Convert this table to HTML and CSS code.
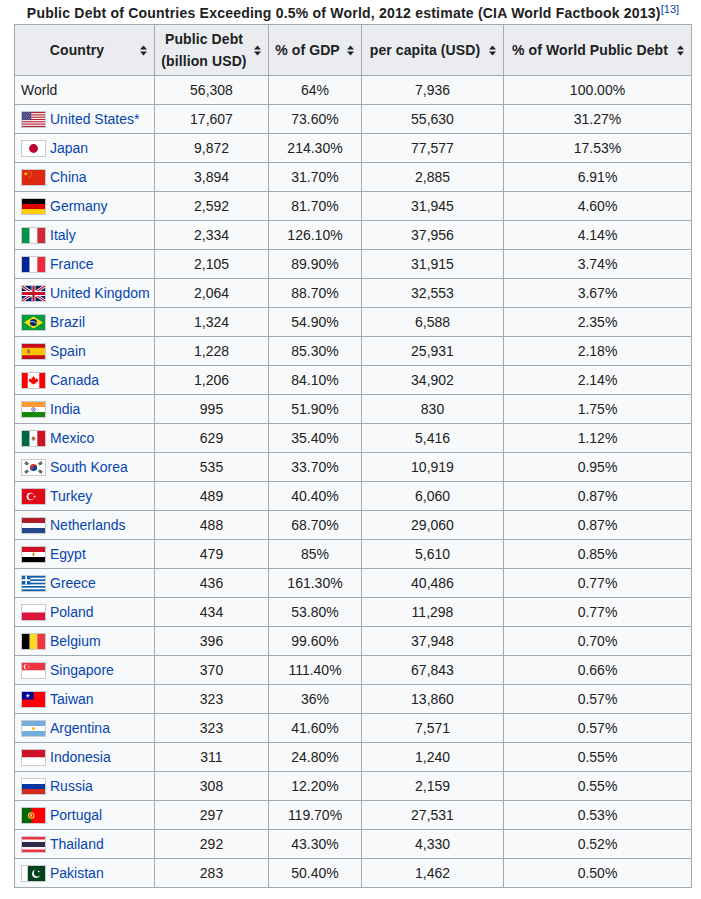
FILE: index.html
```html
<!DOCTYPE html>
<html lang="en">
<head>
<meta charset="utf-8">
<title>Public Debt of Countries</title>
<link rel="stylesheet" href="styles.css">
</head>
<body>
<svg class="defs" width="0" height="0" aria-hidden="true">
  <defs>
    <symbol id="star" viewBox="-1 -1 2 2" overflow="visible">
      <polygon points="0,-1 0.225,-0.309 0.951,-0.309 0.363,0.118 0.588,0.809 0,0.382 -0.588,0.809 -0.363,0.118 -0.951,-0.309 -0.225,-0.309"/>
    </symbol>
    <symbol id="sort" viewBox="0 0 7 11">
      <polygon points="0,4.5 3.5,0.5 7,4.5" fill="#202122"/>
      <polygon points="0,6.5 3.5,10.5 7,6.5" fill="#202122"/>
    </symbol>
  </defs>
</svg>
<div class="page">
<table class="wikitable">
  <caption>Public Debt of Countries Exceeding 0.5% of World, 2012 estimate (CIA World Factbook 2013)<sup class="ref">[13]</sup></caption>
  <colgroup>
    <col class="c1"><col class="c2"><col class="c3"><col class="c4"><col class="c5">
  </colgroup>
  <thead>
    <tr>
      <th><div class="th"><span class="lbl">Country</span><svg class="sort" width="7" height="11"><use href="#sort"/></svg></div></th>
      <th><div class="th"><span class="lbl">Public Debt<br>(billion USD)</span><svg class="sort" width="7" height="11"><use href="#sort"/></svg></div></th>
      <th><div class="th"><span class="lbl">% of GDP</span><svg class="sort" width="7" height="11"><use href="#sort"/></svg></div></th>
      <th><div class="th"><span class="lbl">per capita (USD)</span><svg class="sort" width="7" height="11"><use href="#sort"/></svg></div></th>
      <th><div class="th"><span class="lbl">% of World Public Debt</span><svg class="sort" width="7" height="11"><use href="#sort"/></svg></div></th>
    </tr>
  </thead>
  <tbody>
    <tr><td class="name">World</td><td>56,308</td><td>64%</td><td>7,936</td><td>100.00%</td></tr>

    <tr><td class="name"><svg class="flag" viewBox="0 0 23 15" width="23" height="15" preserveAspectRatio="none">
      <rect width="23" height="15" fill="#fff"/>
      <g fill="#b22234"><rect y="0" width="23" height="1.154"/><rect y="2.308" width="23" height="1.154"/><rect y="4.615" width="23" height="1.154"/><rect y="6.923" width="23" height="1.154"/><rect y="9.231" width="23" height="1.154"/><rect y="11.538" width="23" height="1.154"/><rect y="13.846" width="23" height="1.154"/></g>
      <rect width="9.2" height="8.08" fill="#4a4b7e"/>
      <g fill="#9a9bc0"><circle cx="1.5" cy="1.3" r="0.45"/><circle cx="3.5" cy="1.3" r="0.45"/><circle cx="5.5" cy="1.3" r="0.45"/><circle cx="7.5" cy="1.3" r="0.45"/><circle cx="2.5" cy="3" r="0.45"/><circle cx="4.5" cy="3" r="0.45"/><circle cx="6.5" cy="3" r="0.45"/><circle cx="1.5" cy="4.7" r="0.45"/><circle cx="3.5" cy="4.7" r="0.45"/><circle cx="5.5" cy="4.7" r="0.45"/><circle cx="7.5" cy="4.7" r="0.45"/><circle cx="2.5" cy="6.4" r="0.45"/><circle cx="4.5" cy="6.4" r="0.45"/><circle cx="6.5" cy="6.4" r="0.45"/></g>
    </svg><a href="#">United States*</a></td><td>17,607</td><td>73.60%</td><td>55,630</td><td>31.27%</td></tr>

    <tr><td class="name"><svg class="flag" viewBox="0 0 23 15" width="23" height="15">
      <rect width="23" height="15" fill="#fff"/><circle cx="11.5" cy="7.5" r="4.4" fill="#bc002d"/>
    </svg><a href="#">Japan</a></td><td>9,872</td><td>214.30%</td><td>77,577</td><td>17.53%</td></tr>

    <tr><td class="name"><svg class="flag" viewBox="0 0 23 15" width="23" height="15">
      <rect width="23" height="15" fill="#de2910"/>
      <g fill="#ffde00"><use href="#star" x="1.6" y="1.6" width="4.4" height="4.4"/><use href="#star" x="7" y="0.8" width="1.5" height="1.5"/><use href="#star" x="8.6" y="2.3" width="1.5" height="1.5"/><use href="#star" x="8.6" y="4.4" width="1.5" height="1.5"/><use href="#star" x="7" y="5.9" width="1.5" height="1.5"/></g>
    </svg><a href="#">China</a></td><td>3,894</td><td>31.70%</td><td>2,885</td><td>6.91%</td></tr>

    <tr><td class="name"><svg class="flag" viewBox="0 0 23 15" width="23" height="15">
      <rect width="23" height="5" fill="#000"/><rect y="5" width="23" height="5" fill="#dd0000"/><rect y="10" width="23" height="5" fill="#ffce00"/>
    </svg><a href="#">Germany</a></td><td>2,592</td><td>81.70%</td><td>31,945</td><td>4.60%</td></tr>

    <tr><td class="name"><svg class="flag" viewBox="0 0 23 15" width="23" height="15">
      <rect width="7.67" height="15" fill="#009246"/><rect x="7.67" width="7.67" height="15" fill="#fff"/><rect x="15.33" width="7.67" height="15" fill="#ce2b37"/>
    </svg><a href="#">Italy</a></td><td>2,334</td><td>126.10%</td><td>37,956</td><td>4.14%</td></tr>

    <tr><td class="name"><svg class="flag" viewBox="0 0 23 15" width="23" height="15">
      <rect width="7.67" height="15" fill="#002395"/><rect x="7.67" width="7.67" height="15" fill="#fff"/><rect x="15.33" width="7.67" height="15" fill="#ed2939"/>
    </svg><a href="#">France</a></td><td>2,105</td><td>89.90%</td><td>31,915</td><td>3.74%</td></tr>

    <tr><td class="name"><svg class="flag" viewBox="0 0 60 30" width="23" height="15" preserveAspectRatio="none">
      <rect width="60" height="30" fill="#012169"/>
      <path d="M0,0 L60,30 M60,0 L0,30" stroke="#fff" stroke-width="6"/>
      <path d="M0,0 L60,30 M60,0 L0,30" stroke="#c8102e" stroke-width="2.5"/>
      <path d="M30,0 v30 M0,15 h60" stroke="#fff" stroke-width="10"/>
      <path d="M30,0 v30 M0,15 h60" stroke="#c8102e" stroke-width="6"/>
    </svg><a href="#">United Kingdom</a></td><td>2,064</td><td>88.70%</td><td>32,553</td><td>3.67%</td></tr>

    <tr><td class="name"><svg class="flag" viewBox="0 0 23 15" width="23" height="15">
      <rect width="23" height="15" fill="#009c3b"/><polygon points="2,7.5 11.5,1.5 21,7.5 11.5,13.5" fill="#ffdf00"/><circle cx="11.5" cy="7.5" r="3.6" fill="#002776"/><path d="M8.1,6.8 Q11.5,5.8 14.9,8.2" stroke="#fff" stroke-width="0.7" fill="none"/>
    </svg><a href="#">Brazil</a></td><td>1,324</td><td>54.90%</td><td>6,588</td><td>2.35%</td></tr>

    <tr><td class="name"><svg class="flag" viewBox="0 0 23 15" width="23" height="15">
      <rect width="23" height="15" fill="#c60b1e"/><rect y="3.75" width="23" height="7.5" fill="#ffc400"/><rect x="5" y="5.6" width="3" height="3.6" rx="0.8" fill="#c0613c"/>
    </svg><a href="#">Spain</a></td><td>1,228</td><td>85.30%</td><td>25,931</td><td>2.18%</td></tr>

    <tr><td class="name"><svg class="flag" viewBox="0 0 23 15" width="23" height="15">
      <rect width="23" height="15" fill="#fff"/><rect width="5.75" height="15" fill="#ff0000"/><rect x="17.25" width="5.75" height="15" fill="#ff0000"/>
      <polygon points="11.5,3 12.3,4.6 13.3,4.2 12.9,6.6 14.7,5.3 15.1,6.2 16.3,6 15.8,7.5 16.5,8 13.2,10.3 13.4,11 11.7,10.8 11.7,12.5 11.3,12.5 11.3,10.8 9.6,11 9.8,10.3 6.5,8 7.2,7.5 6.7,6 7.9,6.2 8.3,5.3 10.1,6.6 9.7,4.2 10.7,4.6" fill="#ff0000"/>
    </svg><a href="#">Canada</a></td><td>1,206</td><td>84.10%</td><td>34,902</td><td>2.14%</td></tr>

    <tr><td class="name"><svg class="flag" viewBox="0 0 23 15" width="23" height="15">
      <rect width="23" height="5" fill="#ff9933"/><rect y="5" width="23" height="5" fill="#fff"/><rect y="10" width="23" height="5" fill="#138808"/><circle cx="11.5" cy="7.5" r="1.8" fill="none" stroke="#000080" stroke-width="0.6"/><circle cx="11.5" cy="7.5" r="0.5" fill="#000080"/>
    </svg><a href="#">India</a></td><td>995</td><td>51.90%</td><td>830</td><td>1.75%</td></tr>

    <tr><td class="name"><svg class="flag" viewBox="0 0 23 15" width="23" height="15">
      <rect width="7.67" height="15" fill="#006847"/><rect x="7.67" width="7.67" height="15" fill="#fff"/><rect x="15.33" width="7.67" height="15" fill="#ce1126"/><circle cx="11.5" cy="7.3" r="1.7" fill="#a06a3a"/><path d="M9.6,8.6 Q11.5,10.6 13.4,8.6" stroke="#4a8a3a" stroke-width="0.6" fill="none"/>
    </svg><a href="#">Mexico</a></td><td>629</td><td>35.40%</td><td>5,416</td><td>1.12%</td></tr>

    <tr><td class="name"><svg class="flag" viewBox="0 0 23 15" width="23" height="15">
      <rect width="23" height="15" fill="#fff"/>
      <path d="M7.9,7.5 A3.6,3.6 0 0 1 15.1,7.5 Z" fill="#cd2e3a"/><path d="M7.9,7.5 A3.6,3.6 0 0 0 15.1,7.5 Z" fill="#0047a0"/>
      <circle cx="9.7" cy="7.5" r="1.8" fill="#cd2e3a"/><circle cx="13.3" cy="7.5" r="1.8" fill="#0047a0"/>
      <g fill="#000">
        <g transform="translate(4.6,3.4) rotate(34)"><rect x="-1.9" y="-1.3" width="3.8" height="0.6"/><rect x="-1.9" y="-0.3" width="3.8" height="0.6"/><rect x="-1.9" y="0.7" width="3.8" height="0.6"/></g>
        <g transform="translate(18.4,3.4) rotate(-34)"><rect x="-1.9" y="-1.3" width="3.8" height="0.6"/><rect x="-1.9" y="-0.3" width="3.8" height="0.6"/><rect x="-1.9" y="0.7" width="3.8" height="0.6"/></g>
        <g transform="translate(4.6,11.6) rotate(-34)"><rect x="-1.9" y="-1.3" width="3.8" height="0.6"/><rect x="-1.9" y="-0.3" width="3.8" height="0.6"/><rect x="-1.9" y="0.7" width="3.8" height="0.6"/></g>
        <g transform="translate(18.4,11.6) rotate(34)"><rect x="-1.9" y="-1.3" width="3.8" height="0.6"/><rect x="-1.9" y="-0.3" width="3.8" height="0.6"/><rect x="-1.9" y="0.7" width="3.8" height="0.6"/></g>
      </g>
    </svg><a href="#">South Korea</a></td><td>535</td><td>33.70%</td><td>10,919</td><td>0.95%</td></tr>

    <tr><td class="name"><svg class="flag" viewBox="0 0 23 15" width="23" height="15">
      <rect width="23" height="15" fill="#e30a17"/><circle cx="8.4" cy="7.5" r="3.8" fill="#fff"/><circle cx="9.4" cy="7.5" r="3" fill="#e30a17"/><use href="#star" x="11.2" y="6.1" width="2.8" height="2.8" fill="#fff"/>
    </svg><a href="#">Turkey</a></td><td>489</td><td>40.40%</td><td>6,060</td><td>0.87%</td></tr>

    <tr><td class="name"><svg class="flag" viewBox="0 0 23 15" width="23" height="15">
      <rect width="23" height="5" fill="#ae1c28"/><rect y="5" width="23" height="5" fill="#fff"/><rect y="10" width="23" height="5" fill="#21468b"/>
    </svg><a href="#">Netherlands</a></td><td>488</td><td>68.70%</td><td>29,060</td><td>0.87%</td></tr>

    <tr><td class="name"><svg class="flag" viewBox="0 0 23 15" width="23" height="15">
      <rect width="23" height="5" fill="#ce1126"/><rect y="5" width="23" height="5" fill="#fff"/><rect y="10" width="23" height="5" fill="#000"/><rect x="10.6" y="5.8" width="1.8" height="3.4" rx="0.6" fill="#c09300"/>
    </svg><a href="#">Egypt</a></td><td>479</td><td>85%</td><td>5,610</td><td>0.85%</td></tr>

    <tr><td class="name"><svg class="flag" viewBox="0 0 23 15" width="23" height="15" preserveAspectRatio="none">
      <rect width="23" height="15" fill="#fff"/>
      <g fill="#0d5eaf"><rect y="0" width="23" height="1.667"/><rect y="3.333" width="23" height="1.667"/><rect y="6.667" width="23" height="1.667"/><rect y="10" width="23" height="1.667"/><rect y="13.333" width="23" height="1.667"/><rect width="8.333" height="8.333"/></g>
      <g fill="#fff"><rect y="3.333" width="8.333" height="1.667"/><rect x="3.333" width="1.667" height="8.333"/></g>
    </svg><a href="#">Greece</a></td><td>436</td><td>161.30%</td><td>40,486</td><td>0.77%</td></tr>

    <tr><td class="name"><svg class="flag" viewBox="0 0 23 15" width="23" height="15">
      <rect width="23" height="7.5" fill="#fff"/><rect y="7.5" width="23" height="7.5" fill="#dc143c"/>
    </svg><a href="#">Poland</a></td><td>434</td><td>53.80%</td><td>11,298</td><td>0.77%</td></tr>

    <tr><td class="name"><svg class="flag" viewBox="0 0 23 15" width="23" height="15">
      <rect width="7.67" height="15" fill="#000"/><rect x="7.67" width="7.67" height="15" fill="#fdda24"/><rect x="15.33" width="7.67" height="15" fill="#ef3340"/>
    </svg><a href="#">Belgium</a></td><td>396</td><td>99.60%</td><td>37,948</td><td>0.70%</td></tr>

    <tr><td class="name"><svg class="flag" viewBox="0 0 23 15" width="23" height="15">
      <rect width="23" height="7.5" fill="#ef3340"/><rect y="7.5" width="23" height="7.5" fill="#fff"/><circle cx="4.2" cy="3.7" r="2.5" fill="#fff"/><circle cx="5.1" cy="3.7" r="2.2" fill="#ef3340"/>
      <g fill="#fff"><circle cx="7" cy="2.3" r="0.4"/><circle cx="5.9" cy="3.2" r="0.4"/><circle cx="8.1" cy="3.2" r="0.4"/><circle cx="6.3" cy="4.6" r="0.4"/><circle cx="7.7" cy="4.6" r="0.4"/></g>
    </svg><a href="#">Singapore</a></td><td>370</td><td>111.40%</td><td>67,843</td><td>0.66%</td></tr>

    <tr><td class="name"><svg class="flag" viewBox="0 0 23 15" width="23" height="15">
      <rect width="23" height="15" fill="#fe0000"/><rect width="11.5" height="7.5" fill="#000095"/><use href="#star" x="3" y="1" width="5.5" height="5.5" fill="#fff"/><circle cx="5.75" cy="3.75" r="1.5" fill="#000095"/><circle cx="5.75" cy="3.75" r="1.15" fill="#fff"/>
    </svg><a href="#">Taiwan</a></td><td>323</td><td>36%</td><td>13,860</td><td>0.57%</td></tr>

    <tr><td class="name"><svg class="flag" viewBox="0 0 23 15" width="23" height="15">
      <rect width="23" height="5" fill="#74acdf"/><rect y="5" width="23" height="5" fill="#fff"/><rect y="10" width="23" height="5" fill="#74acdf"/><circle cx="11.5" cy="7.5" r="1.5" fill="#f6b40e"/>
    </svg><a href="#">Argentina</a></td><td>323</td><td>41.60%</td><td>7,571</td><td>0.57%</td></tr>

    <tr><td class="name"><svg class="flag" viewBox="0 0 23 15" width="23" height="15">
      <rect width="23" height="7.5" fill="#ce1126"/><rect y="7.5" width="23" height="7.5" fill="#fff"/>
    </svg><a href="#">Indonesia</a></td><td>311</td><td>24.80%</td><td>1,240</td><td>0.55%</td></tr>

    <tr><td class="name"><svg class="flag" viewBox="0 0 23 15" width="23" height="15">
      <rect width="23" height="5" fill="#fff"/><rect y="5" width="23" height="5" fill="#0039a6"/><rect y="10" width="23" height="5" fill="#d52b1e"/>
    </svg><a href="#">Russia</a></td><td>308</td><td>12.20%</td><td>2,159</td><td>0.55%</td></tr>

    <tr><td class="name"><svg class="flag" viewBox="0 0 23 15" width="23" height="15">
      <rect width="23" height="15" fill="#ff0000"/><rect width="9.2" height="15" fill="#006600"/><circle cx="9.2" cy="7.5" r="3.3" fill="#ffe000"/><circle cx="9.2" cy="7.5" r="2.2" fill="#ff0000"/><rect x="8.3" y="6.2" width="1.8" height="2.4" rx="0.5" fill="#fff"/>
    </svg><a href="#">Portugal</a></td><td>297</td><td>119.70%</td><td>27,531</td><td>0.53%</td></tr>

    <tr><td class="name"><svg class="flag" viewBox="0 0 23 15" width="23" height="15">
      <rect width="23" height="15" fill="#f4f5f8"/><rect width="23" height="2.5" fill="#ef3340"/><rect y="5" width="23" height="5" fill="#2d2a4a"/><rect y="12.5" width="23" height="2.5" fill="#ef3340"/>
    </svg><a href="#">Thailand</a></td><td>292</td><td>43.30%</td><td>4,330</td><td>0.52%</td></tr>

    <tr><td class="name"><svg class="flag" viewBox="0 0 23 15" width="23" height="15">
      <rect width="23" height="15" fill="#fff"/><rect x="5.75" width="17.25" height="15" fill="#01411c"/><circle cx="14.2" cy="7.8" r="4.1" fill="#fff"/><circle cx="15.4" cy="6.8" r="3.6" fill="#01411c"/><use href="#star" x="15.4" y="4.2" width="2.6" height="2.6" fill="#fff"/>
    </svg><a href="#">Pakistan</a></td><td>283</td><td>50.40%</td><td>1,462</td><td>0.50%</td></tr>
  </tbody>
</table>
</div>
</body>
</html>
```
FILE: styles.css
```css
html, body {
  margin: 0;
  padding: 0;
  background: #ffffff;
}

body {
  font-family: "Liberation Sans", Arial, sans-serif;
  font-size: 14px;
  color: #202122;
}

.defs {
  position: absolute;
  width: 0;
  height: 0;
  overflow: hidden;
}

.page {
  padding: 2px 0 0 14px;
}

a {
  color: #0645ad;
  text-decoration: none;
}

.wikitable {
  border-collapse: collapse;
  table-layout: fixed;
  width: 677px;
  background: #f8f9fa;
  color: #202122;
  border: 1px solid #a2a9b1;
  line-height: 22px;
}

.wikitable caption {
  font-weight: bold;
  text-align: center;
  line-height: 22px;
  background: #ffffff;
  white-space: nowrap;
  letter-spacing: 0.22px;
}

.ref {
  font-weight: normal;
  font-size: 11px;
  line-height: 1;
  vertical-align: 5px;
  letter-spacing: 0;
  color: #0645ad;
}

.c1 { width: 140px; }
.c2 { width: 114px; }
.c3 { width: 93px; }
.c4 { width: 142px; }
.c5 { width: 188px; }

.wikitable th,
.wikitable td {
  border: 1px solid #a2a9b1;
  padding: 3px 6px;
  height: 22px;
}

.wikitable th {
  background: #eaecf0;
  font-weight: bold;
  vertical-align: middle;
  padding-right: 7px;
}

.th {
  display: flex;
  align-items: center;
}

.lbl {
  flex: 1;
  text-align: center;
  letter-spacing: 0.1px;
}

.sort {
  display: block;
  flex: none;
  margin-left: 7px;
}

.wikitable td {
  text-align: center;
  white-space: nowrap;
}

.wikitable td.name {
  text-align: left;
}

.flag {
  display: inline-block;
  vertical-align: middle;
  width: 23px;
  height: 15px;
  border: 1px solid #c8ccd1;
  margin: -2px 4px 0 0;
}
```
